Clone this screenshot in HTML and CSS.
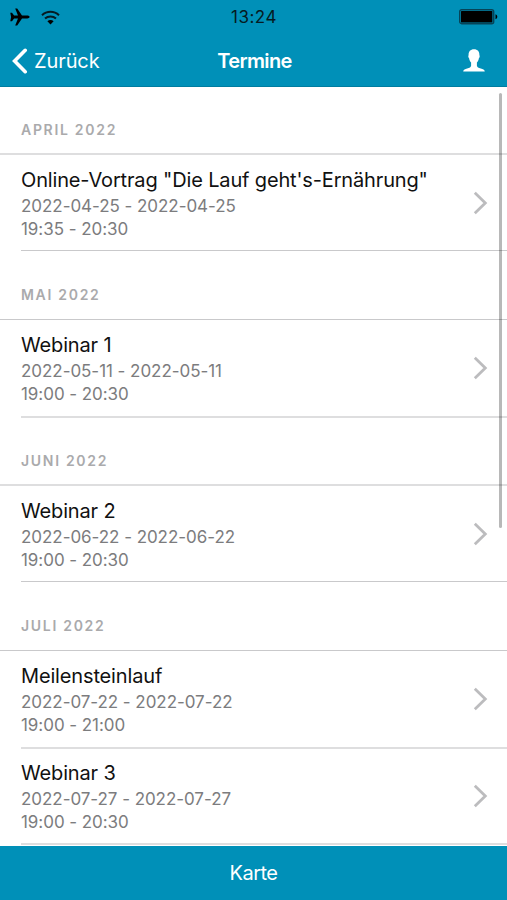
FILE: index.html
```html
<!DOCTYPE html>
<html lang="de">

<head>
    <meta charset="UTF-8">
    <meta name="viewport" content="width=device-width, initial-scale=1.0">
    <title>Termine</title>
    <link rel="stylesheet" href="styles.css">
</head>

<body>
    <header class="header">
        <div class="status-bar">
            <div class="status-left">
                <svg width="20" height="18" viewBox="0 0 20 18">
                    <path d="M0.3 4.8h1.7l2.1 2.8H8L5.2 0.4h2L12 7.6h5.2c1.3 0 2.4 0.6 2.4 1.4s-1.1 1.4-2.4 1.4H12L7.2 17.6h-2L8 10.4H4.1L2 13.2H0.3l0.8-4.2z" />
                </svg>
                <svg width="19" height="15" viewBox="0 0 19 15">
                    <path d="M1 5.3C5.8 0.7 13.2 0.7 18 5.3M4 8.6c3.1-2.9 7.9-2.9 11 0" fill="none" stroke="#061b22" stroke-width="2" />
                    <path d="M6.4 11.2c1.8-1.6 4.4-1.6 6.2 0L9.5 14.4z" />
                </svg>
            </div>
            <span class="clock">13:24</span>
            <svg class="battery" width="39" height="16" viewBox="0 0 39 16">
                <rect x="0.7" y="0.7" width="34" height="14" rx="2" fill="none" stroke="#064458" stroke-width="1.4" />
                <rect x="2" y="2" width="31.4" height="11.5" rx="0.5" />
                <path d="M36.5 5.2c2.4 0.8 2.4 4.2 0 5z" />
            </svg>
        </div>
        <nav class="nav-bar">
            <a class="back" href="#">
                <svg width="16" height="26" viewBox="0 0 16 26">
                    <path d="M13.2 2.3L2.6 13l10.6 10.7" fill="none" stroke="#fff" stroke-width="3.6" stroke-linecap="round" />
                </svg>
                <span>Zurück</span>
            </a>
            <h1>Termine</h1>
            <a class="profile" href="#">
                <svg width="22" height="23" viewBox="0 0 22 23">
                    <path d="M11 0.3c3.6 0 5.6 2.2 5.4 5.9 0.5 0.5 0.4 2.3-0.5 3-0.4 2-1 3.3-2 4.3v3.2c0.3 2 2.5 2.4 4.7 3.1 2 0.6 3 1.4 3.2 2.8H0.2c0.2-1.4 1.2-2.2 3.2-2.8 2.2-0.7 4.4-1.1 4.7-3.1v-3.2c-1-1-1.6-2.3-2-4.3-0.9-0.7-1-2.5-0.5-3C5.4 2.5 7.4 0.3 11 0.3z" fill="#fff" />
                </svg>
            </a>
        </nav>
    </header>

    <main class="list">
        <h2 class="month thick">April 2022</h2>
        <a class="event" href="#">
            <div class="event-text">
                <h3>Online-Vortrag "Die Lauf geht's-Ernährung"</h3>
                <p>2022-04-25 - 2022-04-25</p>
                <p>19:35 - 20:30</p>
            </div>
            <svg class="arrow" width="15" height="24" viewBox="0 0 15 24"><path d="M1.8 1.8L12.3 12L1.8 22.2" /></svg>
        </a>

        <h2 class="month">Mai 2022</h2>
        <a class="event thick" href="#">
            <div class="event-text">
                <h3>Webinar 1</h3>
                <p>2022-05-11 - 2022-05-11</p>
                <p>19:00 - 20:30</p>
            </div>
            <svg class="arrow" width="15" height="24" viewBox="0 0 15 24"><path d="M1.8 1.8L12.3 12L1.8 22.2" /></svg>
        </a>

        <h2 class="month thick">Juni 2022</h2>
        <a class="event" href="#">
            <div class="event-text">
                <h3>Webinar 2</h3>
                <p>2022-06-22 - 2022-06-22</p>
                <p>19:00 - 20:30</p>
            </div>
            <svg class="arrow" width="15" height="24" viewBox="0 0 15 24"><path d="M1.8 1.8L12.3 12L1.8 22.2" /></svg>
        </a>

        <h2 class="month">Juli 2022</h2>
        <a class="event thick" href="#">
            <div class="event-text">
                <h3>Meilensteinlauf</h3>
                <p>2022-07-22 - 2022-07-22</p>
                <p>19:00 - 21:00</p>
            </div>
            <svg class="arrow" width="15" height="24" viewBox="0 0 15 24"><path d="M1.8 1.8L12.3 12L1.8 22.2" /></svg>
        </a>
        <a class="event thick last" href="#">
            <div class="event-text">
                <h3>Webinar 3</h3>
                <p>2022-07-27 - 2022-07-27</p>
                <p>19:00 - 20:30</p>
            </div>
            <svg class="arrow" width="15" height="24" viewBox="0 0 15 24"><path d="M1.8 1.8L12.3 12L1.8 22.2" /></svg>
        </a>
        <div class="scrollbar"></div>
    </main>

    <footer class="footer">
        <a href="#">Karte</a>
    </footer>
</body>

</html>
```
FILE: styles.css
```css
* {
    box-sizing: border-box;
    margin: 0;
    padding: 0;
}

body {
    font-family: Inter, "Liberation Sans", sans-serif;
    background-color: #fff;
    display: flex;
    flex-direction: column;
    height: 100vh;
    overflow: hidden;
}

a {
    color: inherit;
    text-decoration: none;
}

svg {
    display: block;
}

/* Header */
.header {
    height: 87px;
    flex-shrink: 0;
    background-color: #0090b8;
    border-bottom: 1px solid #007da0;
}

.status-bar {
    display: grid;
    grid-template-columns: 1fr auto 1fr;
    align-items: center;
    height: 34px;
    padding: 0 9px 0 10px;
}

.status-left {
    display: flex;
    align-items: center;
    gap: 11px;
}

.clock {
    font-size: 17px;
    line-height: 34px;
    letter-spacing: 0.5px;
    color: #061b22;
}

.battery {
    justify-self: end;
}

.nav-bar {
    display: grid;
    grid-template-columns: 1fr auto 1fr;
    align-items: center;
    height: 53px;
    padding: 0 12px;
    color: #fff;
}

.back {
    display: flex;
    align-items: center;
    gap: 6px;
    font-size: 20px;
    letter-spacing: -0.1px;
}

.nav-bar h1 {
    padding-left: 2px;
    font-size: 20px;
    font-weight: 600;
    letter-spacing: -0.6px;
}

.profile {
    justify-self: end;
    margin-right: 10px;
}

/* List */
.list {
    position: relative;
    flex: 1;
    overflow: hidden;
}

.month {
    height: 69px;
    padding: 35px 21px 0;
    border-bottom: 1px solid #c9c9cb;
    font-size: 14px;
    line-height: 18px;
    font-weight: 600;
    letter-spacing: 1.7px;
    text-transform: uppercase;
    color: #aaaaac;
}

.month.thick {
    height: 68px;
    padding-top: 34px;
    border-bottom: 2px solid #dededf;
}

.event {
    display: flex;
    justify-content: space-between;
    height: 96px;
    margin-left: 21px;
    padding: 12px 19px 0 0;
    border-bottom: 1px solid #c9c9cb;
}

.event.thick {
    height: 98px;
    border-bottom: 2px solid #dededf;
}

.event.last {
    height: 96px;
    padding-top: 11px;
}

.event h3 {
    margin-bottom: 2px;
    font-size: 20px;
    line-height: 26px;
    font-weight: 400;
    letter-spacing: -0.15px;
    color: #111;
}

.event p {
    font-size: 17px;
    line-height: 23px;
    letter-spacing: -0.05px;
    color: #7c7c7e;
}

.arrow {
    margin-top: 24px;
}

.arrow path {
    fill: none;
    stroke: #bcbcbe;
    stroke-width: 2.8;
}

.scrollbar {
    position: absolute;
    top: 6px;
    right: 5px;
    width: 3px;
    height: 435px;
    border-radius: 2px;
    background-color: rgba(0, 0, 0, 0.28);
}

/* Footer */
.footer {
    height: 54px;
    flex-shrink: 0;
    background-color: #0090b8;
    color: #fff;
    text-align: center;
    font-size: 20px;
    line-height: 55px;
    letter-spacing: -0.5px;
}
```
